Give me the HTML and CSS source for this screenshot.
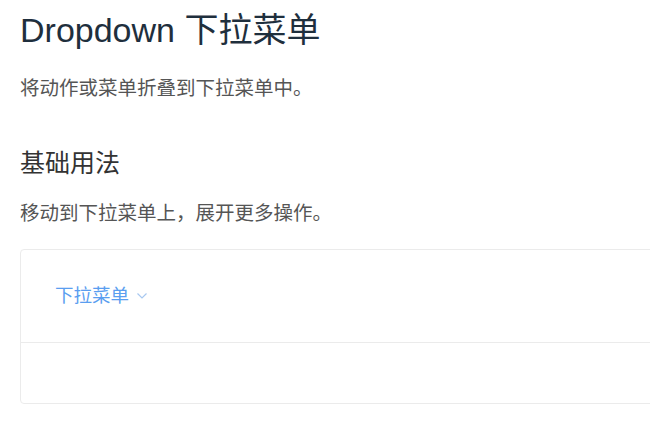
FILE: index.html
```html
<!DOCTYPE html>
<html lang="zh-CN">
<head>
    <meta charset="UTF-8">
    <meta name="viewport" content="width=device-width, initial-scale=1.0">
    <title>Dropdown 下拉菜单</title>
    <link rel="stylesheet" href="styles.css">
</head>
<body>
    <div class="page">
        <h2 class="title">Dropdown 下拉菜单</h2>
        <p class="intro">将动作或菜单折叠到下拉菜单中。</p>

        <h3 class="section">基础用法</h3>
        <p class="desc">移动到下拉菜单上，展开更多操作。</p>

        <div class="demo-block">
            <div class="source">
                <span class="dropdown-link">下拉菜单
                    <svg class="arrow" width="12" height="8" viewBox="0 0 12 8">
                        <polyline points="1.5,1.5 6,6 10.5,1.5" fill="none" stroke="#a8c8f0" stroke-width="1.2"/>
                    </svg>
                </span>
            </div>
            <div class="meta"></div>
        </div>
    </div>
</body>
</html>
```

FILE: styles.css
```css
html, body {
    margin: 0;
    overflow: hidden;
}
body {
    font-family: 'Liberation Sans', 'Noto Sans CJK SC', sans-serif;
    background-color: #fff;
    color: #5e6d82;
}
.page {
    padding-left: 20px;
    overflow: hidden;
}
.title {
    margin: 10px 0 0;
    font-size: 34px;
    line-height: 40px;
    font-weight: normal;
    color: #1f2f3d;
}
.intro, .desc {
    font-size: 19.5px;
    line-height: 28px;
    color: #555;
}
.intro {
    margin: 24px 0 0;
}
.section {
    margin: 44px 0 0;
    font-size: 25px;
    line-height: 34px;
    font-weight: normal;
    color: #333;
}
.desc {
    margin: 19px 0 0;
}
.demo-block {
    margin-top: 22px;
    width: calc(100% + 40px);
    border: 1px solid #ebebeb;
    border-radius: 4px;
}
.source {
    padding: 32px 34px;
    border-bottom: 1px solid #ebebeb;
}
.dropdown-link {
    font-size: 18.5px;
    line-height: 28px;
    color: #5a9ef0;
    display: inline-flex;
    align-items: center;
    gap: 7px;
}
.meta {
    height: 60px;
}
```
